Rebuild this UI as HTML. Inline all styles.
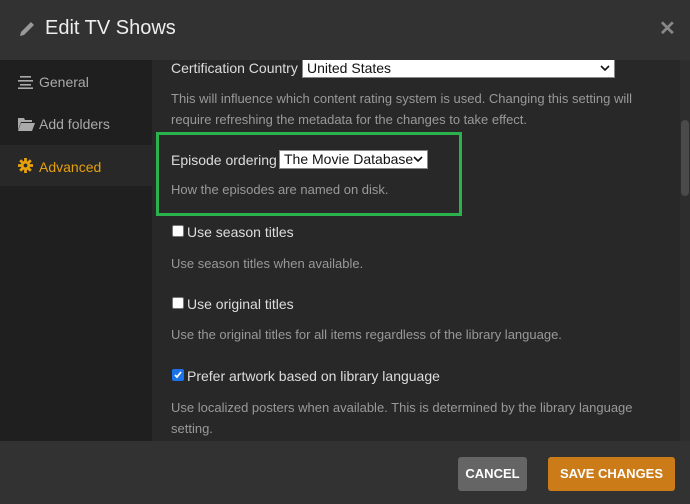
<!DOCTYPE html>
<html><head><style>
*{margin:0;padding:0;box-sizing:border-box}
body{width:690px;height:504px;background:#323232;font-family:"Liberation Sans",sans-serif;position:relative;overflow:hidden;color:#eee}
.hdr{position:absolute;left:0;top:0;width:690px;height:60px;background:#323232}
.hdr .t{position:absolute;left:45px;top:17px;font-size:20px;color:#eee}
.x{position:absolute;left:659px;top:16px;font-size:20px;color:#888;font-weight:bold}
.side{position:absolute;left:0;top:60px;width:152px;height:381px;background:#1f1f1f}
.it{position:absolute;left:0;width:152px;height:42px;font-size:14px;color:#aaa;padding:14px 0 0 39px}
.it.a{background:#282828;color:#e5a00d}
.ic{position:absolute;left:18px;top:14px}
.main{position:absolute;left:152px;top:60px;width:538px;height:381px;background:#282828;overflow:hidden}
.lbl{position:absolute;font-size:14px;color:#ddd}
.hint{position:absolute;font-size:13px;color:#999;line-height:21px}
.sel{position:absolute;background:#fff;color:#111;font-size:14px;border:1px solid #888;padding:0 4px;height:19px;line-height:17px}
.sel svg{position:absolute;right:4px;top:5px}
.cb{position:absolute;width:12px;height:12px;background:#fff;border:1px solid #777;border-radius:2px}
.cb.on{background:#1a73e8;border-color:#1a73e8}
.sb{position:absolute;left:528px;top:0;width:10px;height:381px;background:#2d2d2d}
.sb div{position:absolute;left:1px;top:60px;width:8px;height:76px;background:#4a4a4a;border-radius:4px}
.btn{position:absolute;top:457px;height:34px;border-radius:3px;font-size:13px;font-weight:bold;color:#fff;text-align:center;line-height:34px}
</style></head><body>
<div class="hdr">
<svg style="position:absolute;left:18px;top:20px" width="18" height="18" viewBox="0 0 18 18"><path d="M2 16 L3 12 L13 2 L16 5 L6 15 Z" fill="#999"/></svg>
<div class="t">Edit TV Shows</div>
<div class="x">✕</div>
</div>
<div class="side">
<div class="it" style="top:0">
<svg class="ic" width="15" height="14" viewBox="0 0 15 14" style="top:15px"><rect x="2" y="1" width="11" height="1.6" fill="#aaa"/><rect x="0" y="5" width="15" height="1.6" fill="#aaa"/><rect x="2" y="9" width="11" height="1.6" fill="#aaa"/><rect x="0" y="12.4" width="15" height="1.6" fill="#aaa"/></svg>General</div>
<div class="it" style="top:42px">
<svg class="ic" width="17" height="14" viewBox="0 0 17 14" style="top:15px"><path d="M0 1 H6 L7 3 H14 V5 H3 L0 13 Z" fill="#aaa"/><path d="M3 6 H17 L14 14 H0 Z" fill="#aaa"/></svg>Add folders</div>
<div class="it a" style="top:85px;height:41px">
<svg class="ic" width="15" height="15" viewBox="0 0 16 16" style="top:13px"><g fill="#e5a00d"><circle cx="8" cy="8" r="5"/><rect x="6.5" y="0" width="3" height="16"/><rect x="0" y="6.5" width="16" height="3"/><rect x="6.5" y="0" width="3" height="16" transform="rotate(45 8 8)"/><rect x="6.5" y="0" width="3" height="16" transform="rotate(-45 8 8)"/></g><circle cx="8" cy="8" r="2" fill="#282828"/></svg>Advanced</div>
</div>
<div class="main">
<div class="lbl" style="left:19px;top:0px">Certification Country</div>
<div class="sel" style="left:150px;top:-1px;width:313px">United States<svg width="10" height="7" viewBox="0 0 10 7"><path d="M1 1 L5 5 L9 1" stroke="#111" stroke-width="1.6" fill="none"/></svg></div>
<div class="hint" style="left:19px;top:28px;width:490px">This will influence which content rating system is used. Changing this setting will require refreshing the metadata for the changes to take effect.</div>
<div style="position:absolute;left:4px;top:72px;width:306px;height:84px;border:3px solid #2bb24c"></div>
<div class="lbl" style="left:19px;top:92px">Episode ordering</div>
<div class="sel" style="left:127px;top:90px;width:149px">The Movie Database<svg width="10" height="7" viewBox="0 0 10 7"><path d="M1 1 L5 5 L9 1" stroke="#111" stroke-width="1.6" fill="none"/></svg></div>
<div class="hint" style="left:19px;top:119px">How the episodes are named on disk.</div>
<div class="cb" style="left:20px;top:165px"></div>
<div class="lbl" style="left:35px;top:164px">Use season titles</div>
<div class="hint" style="left:19px;top:193px">Use season titles when available.</div>
<div class="cb" style="left:20px;top:237px"></div>
<div class="lbl" style="left:35px;top:236px">Use original titles</div>
<div class="hint" style="left:19px;top:264px">Use the original titles for all items regardless of the library language.</div>
<div class="cb on" style="left:20px;top:309px"><svg width="10" height="10" viewBox="0 0 10 10" style="position:absolute;left:0;top:0"><path d="M2 5 L4 7 L8 2" stroke="#fff" stroke-width="1.8" fill="none"/></svg></div>
<div class="lbl" style="left:35px;top:308px">Prefer artwork based on library language</div>
<div class="hint" style="left:19px;top:337px;width:470px">Use localized posters when available. This is determined by the library language setting.</div>
<div class="sb"><div></div></div>
</div>
<div class="btn" style="left:458px;width:69px;background:#656565">CANCEL</div>
<div class="btn" style="left:548px;width:127px;background:#cc7b19">SAVE CHANGES</div>
</body></html>
